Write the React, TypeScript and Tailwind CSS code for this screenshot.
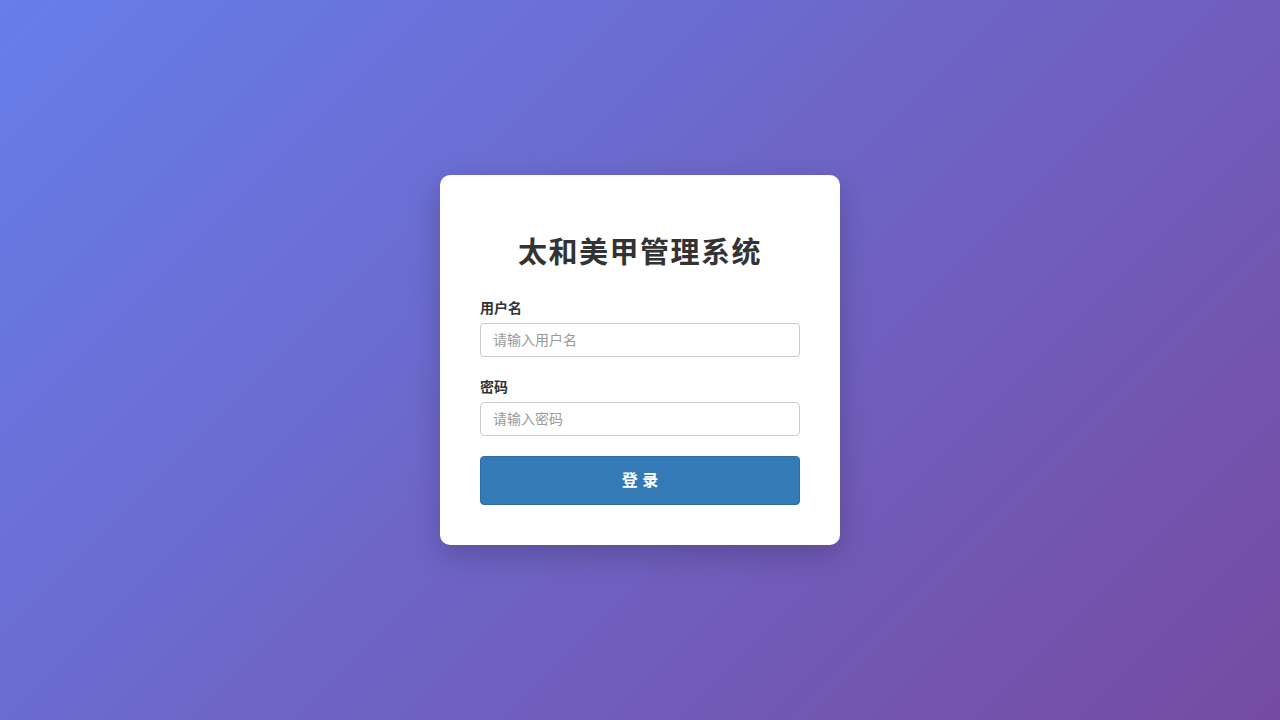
export default function App() {
  return (
    <div
      className="flex min-h-screen w-full items-center justify-center bg-[linear-gradient(135deg,#667eea_0%,#764ba2_100%)]"
      style={{ fontFamily: '"Helvetica Neue", "Liberation Sans", "Noto Sans CJK SC", sans-serif' }}
    >
      <div className="w-[400px] rounded-[10px] bg-white p-10 shadow-[0_10px_30px_rgba(0,0,0,0.2)]">
        <h2 className="mt-[22px] mb-[28px] text-center text-[29px] leading-[33px] font-bold tracking-[1.5px] text-[#333]">
          太和美甲管理系统
        </h2>
        <form onSubmit={(e) => e.preventDefault()}>
          <div className="mb-5">
            <label className="mb-[5px] block text-sm leading-5 font-bold text-[#333]">用户名</label>
            <input
              type="text"
              placeholder="请输入用户名"
              className="block h-[34px] w-full rounded-[4px] border border-[#ccc] px-3 text-sm text-[#555] placeholder:text-[#999] focus:outline-none"
            />
          </div>
          <div className="mb-5">
            <label className="mb-[5px] block text-sm leading-5 font-bold text-[#333]">密码</label>
            <input
              type="password"
              placeholder="请输入密码"
              className="block h-[34px] w-full rounded-[4px] border border-[#ccc] px-3 text-sm text-[#555] placeholder:text-[#999] focus:outline-none"
            />
          </div>
          <button
            type="submit"
            className="block h-[49px] w-full rounded-[4px] border border-[#2e6da4] bg-[#337ab7] text-base font-bold text-white"
          >
            登 录
          </button>
        </form>
      </div>
    </div>
  );
}
